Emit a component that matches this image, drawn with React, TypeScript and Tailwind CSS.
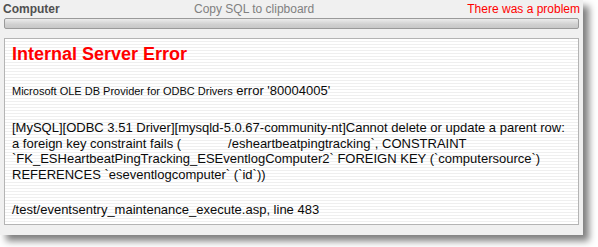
import React from 'react';

const font = { fontFamily: '"Liberation Sans", Arial, sans-serif' };

const HeaderRow = () => (
    <div className="flex items-baseline h-[17px] pt-[2px] pl-[3px] pr-[3px] text-[12px] leading-[15px]">
        <span className="w-[191px] font-bold text-[#505050]">Computer</span>
        <span className="text-[#808080]">Copy SQL to clipboard</span>
        <span className="ml-auto text-[#ff0000]">There was a problem</span>
    </div>
);

const ProgressBar = () => (
    <div className="mx-[4px] mt-[1px] h-[11px] rounded-[2px] border border-[#9a9a9a] bg-[linear-gradient(to_bottom,#ececec,#d0d0d0_60%,#c8c8c8)]" />
);

export default function App() {
    return (
        <div className="w-[598px] h-[247px] bg-white" style={font}>
            <div className="w-[583px] h-[235px] bg-[#f0f0f0] flex flex-col shadow-[6px_6px_7px_rgba(0,0,0,0.5)]">
                <HeaderRow />
                <ProgressBar />
                <div className="mx-[4px] mt-[9px] h-[187px] border border-[#b4b4b4] bg-[repeating-linear-gradient(to_bottom,#ffffff_0px,#ffffff_2px,#efefef_2px,#efefef_3px)] pl-[7px] pt-[4px] text-[#0a0a0a]">
                    <h1 className="text-[18px] leading-[22px] font-bold text-[#ff0000]">Internal Server Error</h1>
                    <p className="mt-[18px] text-[13px] leading-[16px]">
                        <span className="text-[11px]">Microsoft OLE DB Provider for ODBC Drivers</span> error '80004005'
                    </p>
                    <p className="mt-[21px] text-[13px] leading-[15.5px]">
                        [MySQL][ODBC 3.51 Driver][mysqld-5.0.67-community-nt]Cannot delete or update a parent row:<br />
                        a foreign key constraint fails (<span className="inline-block w-[47px]" />/esheartbeatpingtracking`, CONSTRAINT<br />
                        `FK_ESHeartbeatPingTracking_ESEventlogComputer2` FOREIGN KEY (`computersource`)<br />
                        REFERENCES `eseventlogcomputer` (`id`))
                    </p>
                    <p className="mt-[20px] text-[13px] leading-[15.5px]">/test/eventsentry_maintenance_execute.asp, line 483</p>
                </div>
            </div>
        </div>
    );
}
